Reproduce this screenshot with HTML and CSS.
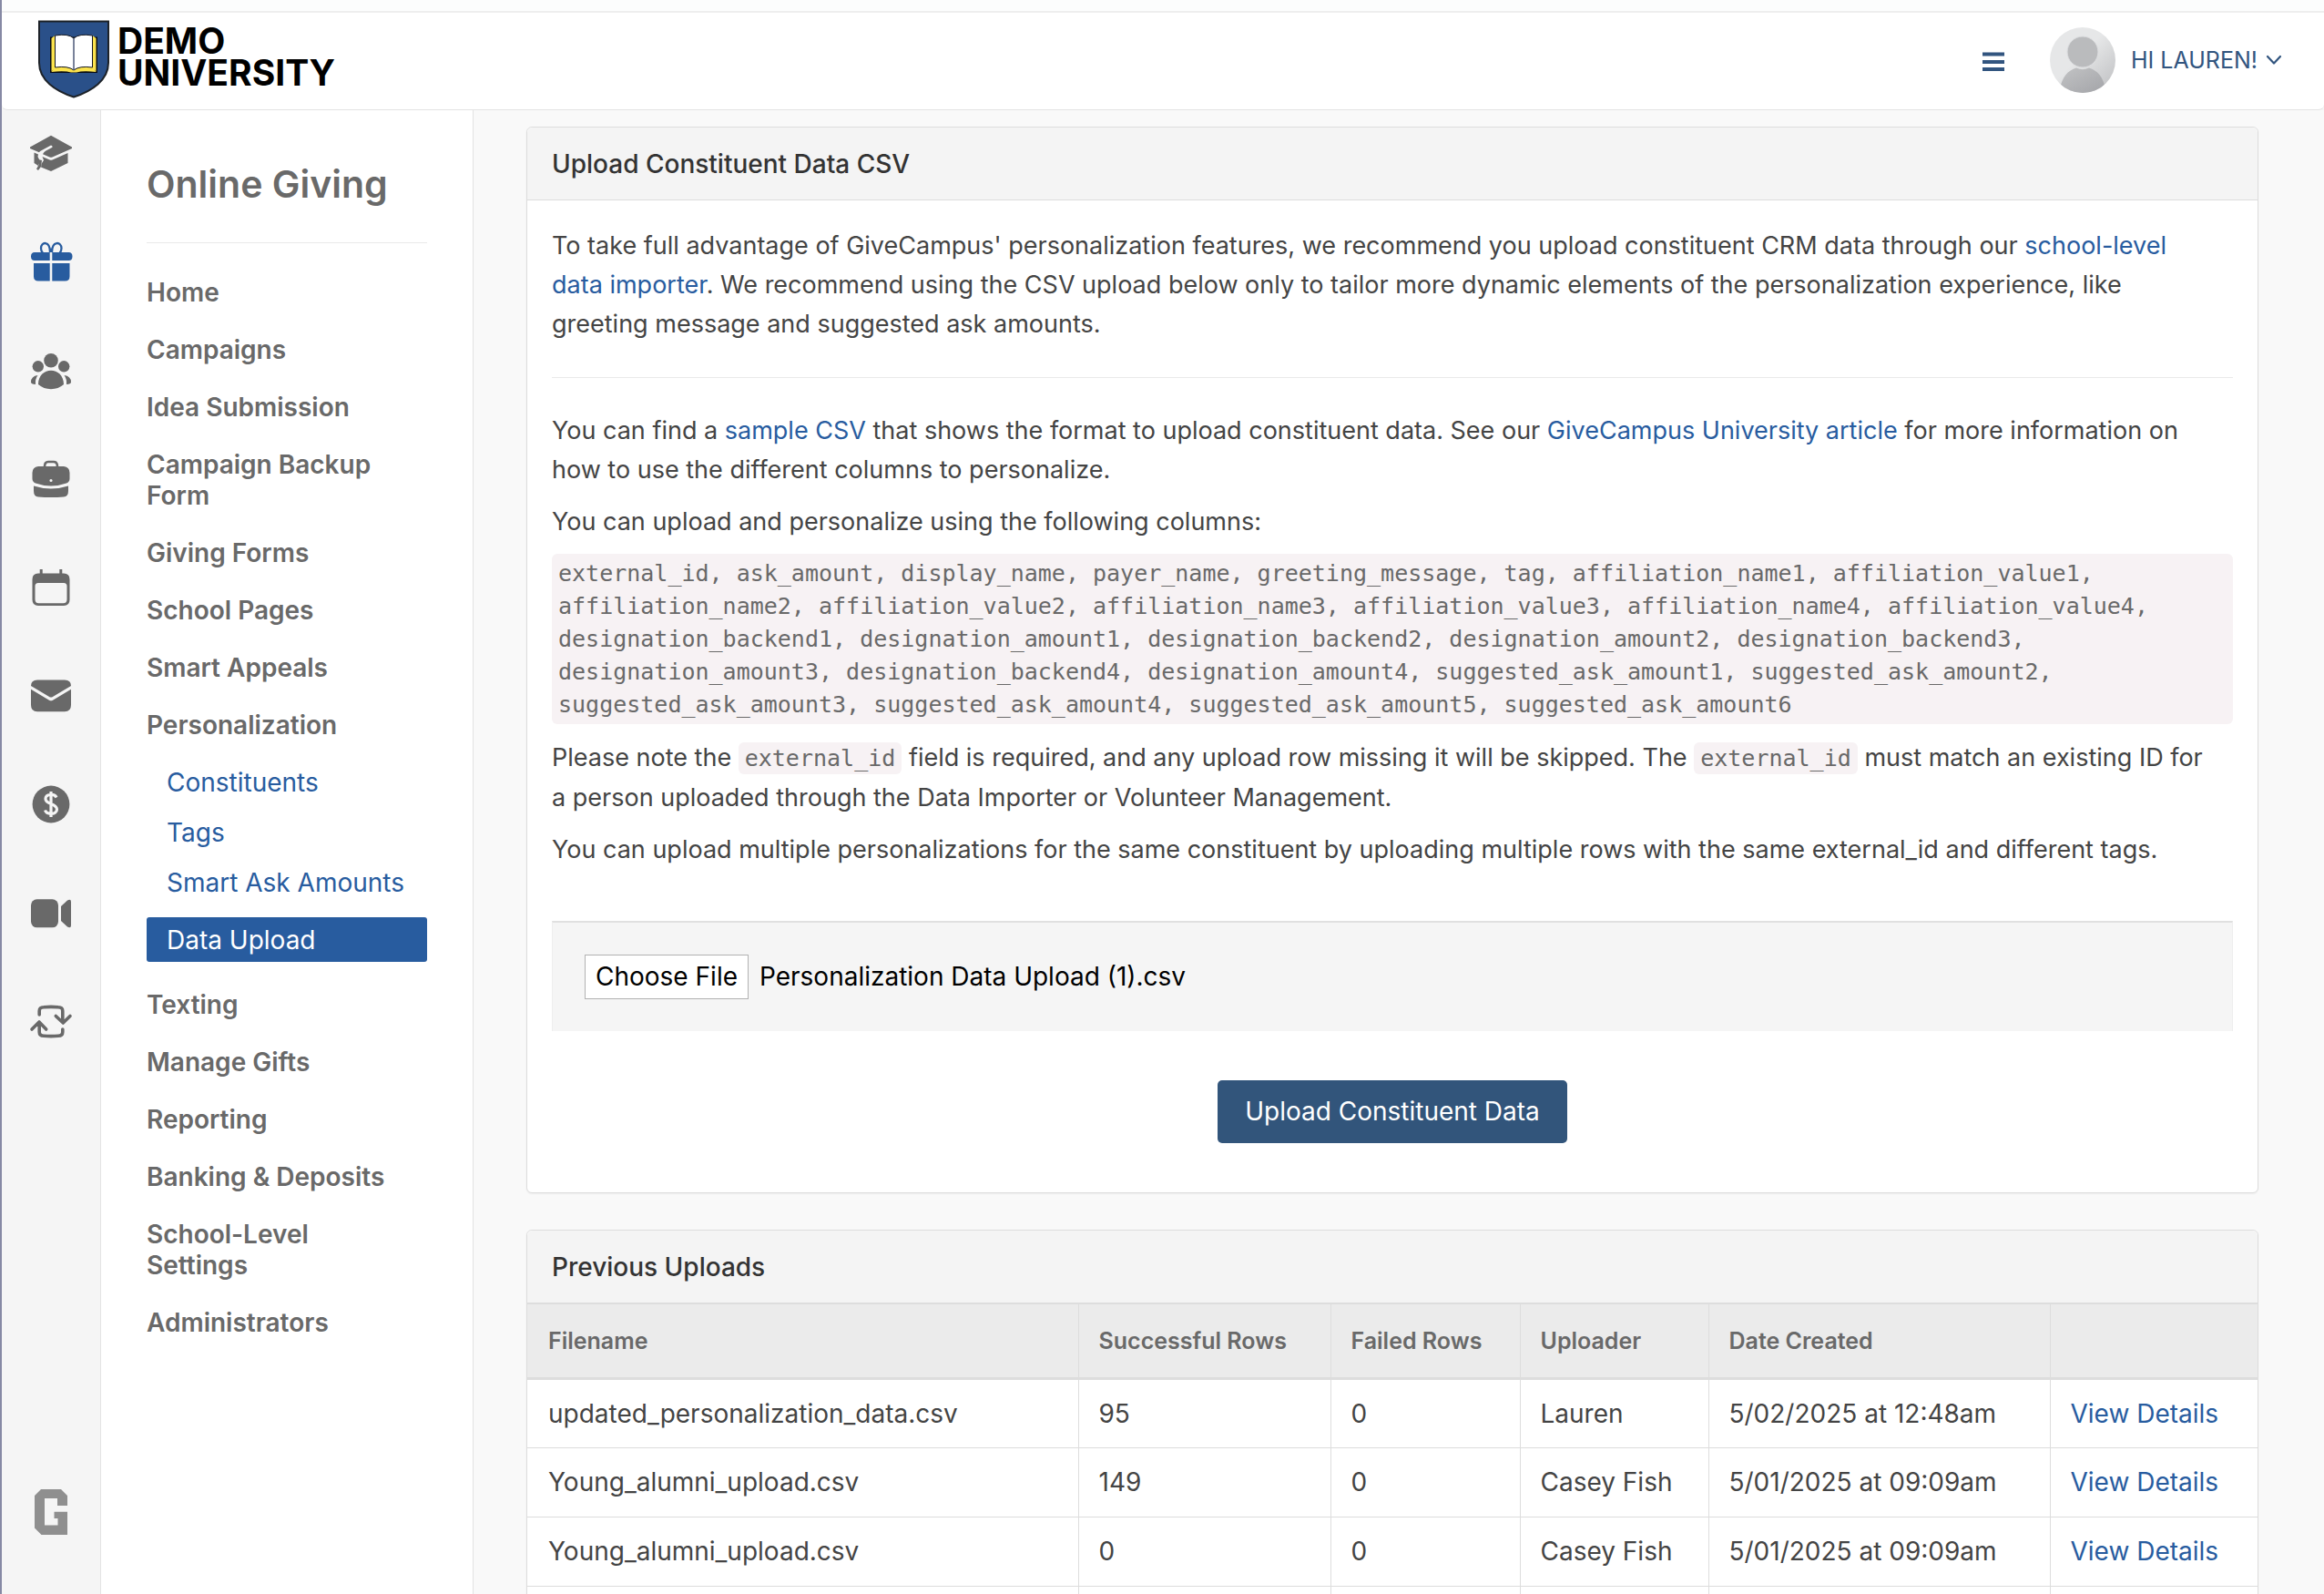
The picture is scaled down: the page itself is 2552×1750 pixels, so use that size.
FILE: index.html
```html
<!DOCTYPE html>
<html lang="en">
<head>
<meta charset="utf-8">
<title>Data Upload - Online Giving</title>
<link rel="stylesheet" href="styles.css">
</head>
<body>
<div class="app">
  <div class="strip"></div>
  <header class="topbar">
    <a class="brand" href="#">
      <svg class="brand-shield" viewBox="0 0 80 86" aria-hidden="true">
        <path d="M2 1.500H78V47C78 66 60 78 40 84.500C20 78 2 66 2 47Z" fill="#2a5089" stroke="#1d2228" stroke-width="2"/>
        <path d="M14 18.500H66V58H14Z" fill="#0b0d12"/>
        <path d="M15.500 20L20 16.500V52L15.500 56.500Z M64.500 20L60 16.500V52L64.500 56.500Z" fill="#fbe34d"/>
        <path d="M19 51.500Q33 50 40 55Q47 50 61 51.500L64.500 57Q50 55.500 43 57.500H37Q30 55.500 15.500 57Z" fill="#fbe34d"/>
        <path d="M19.500 17Q34 14.500 40 20Q46 14.500 60.500 17V52Q46 50 40 55Q34 50 19.500 52Z" fill="#fff" stroke="#14171f"/>
        <path d="M40 20V55" stroke="#4d5878" stroke-width="1.500"/>
      </svg>
      <span class="brand-name">DEMO<br>UNIVERSITY</span>
    </a>
    <div class="account">
      <button class="menu-button" type="button" aria-label="Menu">
        <svg viewBox="0 0 26 22"><path d="M1 0.500H25V4.500H1Z M1 9H25V13H1Z M1 17H25V21H1Z" fill="#32557f"/></svg>
      </button>
      <button class="user-button" type="button">
        <svg class="avatar" viewBox="0 0 72 72" aria-hidden="true">
          <defs>
            <linearGradient id="disc" x1="0" y1="0" x2="1" y2="1"><stop offset="0.450" stop-color="#e6e7e8"/><stop offset="0.850" stop-color="#c8c9cb"/></linearGradient>
            <linearGradient id="torso" x1="0" y1="0" x2="1" y2="1"><stop offset="0.200" stop-color="#bcbdbf"/><stop offset="1" stop-color="#a3a4a8"/></linearGradient>
            <clipPath id="round"><circle cx="36" cy="36" r="36"/></clipPath>
          </defs>
          <g clip-path="url(#round)">
            <rect width="72" height="72" fill="url(#disc)"/>
            <path d="M11 68C13 55 20 47 29 44.500Q36 48 43 44.500C52 47 59 55 61 68V72H11Z" fill="url(#torso)"/>
            <circle cx="36" cy="27" r="17" fill="#babbbd" stroke="#dddee0"/>
          </g>
        </svg>
        <span>HI LAUREN!</span>
        <svg class="chevron" viewBox="0 0 18 12" aria-hidden="true"><path d="M2 2L9 9.500L16 2" fill="none" stroke="#32557f" stroke-width="2.200" stroke-linecap="round" stroke-linejoin="round"/></svg>
      </button>
    </div>
  </header>

  <div class="shell">
    <nav class="rail" aria-label="Products">
      <div class="rail-icons">
        <a href="#" aria-label="School"><svg viewBox="0 0 48 48"><path d="M24 3.800L47 16.500V18L25.500 27.500Q24 28.200 22.500 27.500L15 24.200Q16 22 18 20.800L25.500 16.800Q26 14.800 24 14.600L12.500 20.800Q11.500 21.500 11 22.300L1 18V16.500Z"/><path d="M5.500 22.500L10 24.500L9.500 27L11 30L10 37L5.500 34Z M14.500 27L22.500 30.500Q24 31.200 25.500 30.500L42.500 23V34L24 43L13 38.500L14 34L16 31Z M10 30L14 31L13 38L10 42L8 40.500L10.500 36Z"/></svg></a>
        <a class="is-current" href="#" aria-label="Online Giving"><svg viewBox="0 0 48 48"><path d="M6 13H22.700V22H6Q2 22 2 17.500Q2 13 6 13Z M25.300 13H43.500Q47.500 13 47.500 17.500Q47.500 22 43.500 22H25.300Z M5 25H22.700V44.500H10Q5 44.500 5 39.500Z M25.300 25H44.500V39.500Q44.500 44.500 39.500 44.500H25.300Z"/><path d="M23 13C23 0 13 1 13 8.500Q13 12 15 13.500M25 13C25 0 35.500 1 35.500 8.500Q35.500 12 33.500 13.500" fill="none" stroke="currentColor" stroke-width="2.300"/></svg></a>
        <a href="#" aria-label="Groups"><svg viewBox="0 0 48 48"><circle cx="24" cy="12.700" r="7.800"/><circle cx="9.800" cy="19.300" r="6.200"/><circle cx="38.200" cy="19.300" r="6.200"/><path d="M10 39C10 18.500 38 18.500 38 39Q32 44.200 24 44.200T10 39Z M9.500 29Q6.500 33 7 39Q2 38.500 2 36.500Q2 30 9.500 29Z M38.500 29Q41.500 33 41 39Q46 38.500 46 36.500Q46 30 38.500 29Z"/></svg></a>
        <a href="#" aria-label="Volunteers"><svg viewBox="0 0 48 48"><path d="M17 10.500Q17 5 21 5H27Q31 5 31 10.500" fill="none" stroke="currentColor" stroke-width="2.600"/><path fill-rule="evenodd" d="M10 10H38Q44.500 11 44.500 17V23.500Q44.500 27 41 28.500Q24 34.500 7 28.500Q3.500 27 3.500 23.500V17Q3.500 11 10 10Z M24 23.900A1.600 1.600 0 1 0 24 27.100A1.600 1.600 0 1 0 24 23.900Z"/><path d="M5 31.500Q24 37.500 43 31.500V37Q43 43 38 43.500Q24 44.500 10 43.500Q5 43 5 37Z"/></svg></a>
        <a href="#" aria-label="Events"><svg viewBox="0 0 48 48"><path fill-rule="evenodd" d="M10 8.500H38Q44.500 8.500 44.500 15V37.500Q44.500 44 38 44H10Q3.500 44 3.500 37.500V15Q3.500 8.500 10 8.500Z M10 19Q6.500 19 6.500 22.500V37Q6.500 41.200 10.500 41.200H37.500Q41.500 41.200 41.500 37V22.500Q41.500 19 38 19Z"/><path d="M11.700 4H14.700V10H11.700Z M33.300 4H36.300V10H33.300Z"/></svg></a>
        <a href="#" aria-label="Email"><svg viewBox="0 0 48 48"><path d="M9 6.500H39Q46 6.500 46 13L25.500 25.200Q24 26 22.500 25.200L2 13Q2 6.500 9 6.500Z M2 16.800L22 28.700Q24 29.800 26 28.700L46 16.800V34Q46 41.300 39 41.300H9Q2 41.300 2 34Z"/></svg></a>
        <a href="#" aria-label="Payments"><svg viewBox="0 0 48 48"><circle cx="24" cy="24" r="20.400"/><path d="M30 16.500C28 12 18 12.500 18 18C18 24.500 30 22.500 30.500 29.500C30.500 35.500 19.500 36 17.500 30.500M24 10V38" fill="none" stroke="#f5f5f5" stroke-width="3.200"/></svg></a>
        <a href="#" aria-label="Video"><svg viewBox="0 0 48 48"><rect x="2" y="9.300" width="30" height="31" rx="6.500"/><path d="M35 17L42 10.500Q46 8.500 46 12V38Q46 41.500 42 39.500L35 33Z"/></svg></a>
        <a href="#" aria-label="Sync"><svg viewBox="0 0 48 48"><path d="M11.200 17V13Q11.200 8.800 16 8.800Q24 7.900 32 8.800Q36.800 8.800 36.800 13V25M29.300 18.500L37.300 26L45 18.500M36.800 33V36Q36.800 40.200 32 40.200Q24 41.100 16 40.200Q11.200 40.200 11.200 36V25M3 33L11 25L18.700 33" fill="none" stroke="currentColor" stroke-width="3.600" stroke-linecap="round" stroke-linejoin="round"/></svg></a>
      </div>
      <a class="rail-logo" href="#" aria-label="GiveCampus"><svg viewBox="0 0 36 50"><path d="M7 0H29L36 7V18H25V10H11V39.500H25.500V32H21.500V24.700H36V50H7.500L0 42.500V7Z"/></svg></a>
    </nav>

    <aside class="sidebar">
      <h1>Online Giving</h1>
      <nav aria-label="Online Giving">
        <ul class="menu">
          <li><a href="#">Home</a></li>
          <li><a href="#">Campaigns</a></li>
          <li><a href="#">Idea Submission</a></li>
          <li><a href="#">Campaign Backup Form</a></li>
          <li><a href="#">Giving Forms</a></li>
          <li><a href="#">School Pages</a></li>
          <li><a href="#">Smart Appeals</a></li>
          <li><a href="#">Personalization</a>
            <ul class="submenu">
              <li><a href="#">Constituents</a></li>
              <li><a href="#">Tags</a></li>
              <li><a href="#">Smart Ask Amounts</a></li>
              <li><a class="is-active" href="#" aria-current="page">Data Upload</a></li>
            </ul>
          </li>
          <li><a href="#">Texting</a></li>
          <li><a href="#">Manage Gifts</a></li>
          <li><a href="#">Reporting</a></li>
          <li><a href="#">Banking &amp; Deposits</a></li>
          <li><a href="#">School-Level Settings</a></li>
          <li><a href="#">Administrators</a></li>
        </ul>
      </nav>
    </aside>

    <main class="content">
      <section class="card">
        <h2>Upload Constituent Data CSV</h2>
        <div class="card-body">
          <p>To take full advantage of GiveCampus' personalization features, we recommend you upload constituent CRM data through our <a href="#">school-level data importer</a>. We recommend using the CSV upload below only to tailor more dynamic elements of the personalization experience, like greeting message and suggested ask amounts.</p>
          <hr>
          <p>You can find a <a href="#">sample CSV</a> that shows the format to upload constituent data. See our <a href="#">GiveCampus University article</a> for more information on how to use the different columns to personalize.</p>
          <p>You can upload and personalize using the following columns:</p>
          <code class="columns">external_id, ask_amount, display_name, payer_name, greeting_message, tag, affiliation_name1, affiliation_value1, affiliation_name2, affiliation_value2, affiliation_name3, affiliation_value3, affiliation_name4, affiliation_value4, designation_backend1, designation_amount1, designation_backend2, designation_amount2, designation_backend3, designation_amount3, designation_backend4, designation_amount4, suggested_ask_amount1, suggested_ask_amount2, suggested_ask_amount3, suggested_ask_amount4, suggested_ask_amount5, suggested_ask_amount6</code>
          <p>Please note the <code>external_id</code> field is required, and any upload row missing it will be skipped. The <code>external_id</code> must match an existing ID for a person uploaded through the Data Importer or Volunteer Management.</p>
          <p>You can upload multiple personalizations for the same constituent by uploading multiple rows with the same external_id and different tags.</p>
          <form class="upload">
            <div class="upload-field"><input id="csv-file" class="file-input" type="file" accept=".csv" aria-label="Constituent data CSV"></div>
            <button class="primary" type="submit">Upload Constituent Data</button>
          </form>
        </div>
      </section>

      <section class="card">
        <h2>Previous Uploads</h2>
        <table class="uploads">
          <colgroup><col class="w-file"><col class="w-ok"><col class="w-failed"><col class="w-user"><col class="w-date"><col class="w-link"></colgroup>
          <thead>
            <tr><th scope="col">Filename</th><th scope="col">Successful Rows</th><th scope="col">Failed Rows</th><th scope="col">Uploader</th><th scope="col">Date Created</th><td></td></tr>
          </thead>
          <tbody>
            <tr><td>updated_personalization_data.csv</td><td>95</td><td>0</td><td>Lauren</td><td>5/02/2025 at 12:48am</td><td><a href="#">View Details</a></td></tr>
            <tr><td>Young_alumni_upload.csv</td><td>149</td><td>0</td><td>Casey Fish</td><td>5/01/2025 at 09:09am</td><td><a href="#">View Details</a></td></tr>
            <tr><td>Young_alumni_upload.csv</td><td>0</td><td>0</td><td>Casey Fish</td><td>5/01/2025 at 09:09am</td><td><a href="#">View Details</a></td></tr>
            <tr><td></td><td></td><td></td><td></td><td></td><td></td></tr>
          </tbody>
        </table>
      </section>
    </main>
  </div>
</div>
<script src="script.js"></script>
</body>
</html>
```
FILE: styles.css
```css
* { box-sizing: border-box; }

body {
  margin: 0;
  font-family: Inter, "Liberation Sans", sans-serif;
  font-size: 28px;
  line-height: 43px;
  color: #444;
  background: #f9f9f9;
}

a { color: #285c9f; text-decoration: none; }
h1, h2, p, ul { margin: 0; padding: 0; }
ul { list-style: none; }
svg { display: block; }
button { font: inherit; border: 0; background: none; padding: 0; cursor: pointer; }

.app {
  display: flex;
  flex-direction: column;
  height: 100vh;
  border-left: 2px solid #8689a4;
  background: #f5f5f5;
}

.strip { flex: none; height: 14px; background: #fcfdfd; border-bottom: 2px solid #eee; }

/* Top bar */
.topbar {
  flex: none;
  display: flex;
  align-items: center;
  justify-content: space-between;
  height: 107px;
  padding: 0 46px 2px 39px;
  background: #fff;
  border-bottom: 1px solid #e3e3e3;
  border-radius: 0 0 6px 6px;
}
.brand { display: flex; align-items: center; gap: 8px; padding-bottom: 2px; color: #000; }
.brand-shield { width: 80px; height: 86px; }
.brand-name { font-size: 39px; line-height: 35px; font-weight: 700; padding-bottom: 6px; }
.account { display: flex; align-items: center; gap: 49px; }
.menu-button { padding-top: 3px; }
.menu-button svg { width: 26px; height: 22px; }
.user-button { display: flex; align-items: center; color: #32557f; font-size: 25px; line-height: 30px; }
.avatar { width: 72px; height: 72px; margin-right: 17px; }
.chevron { width: 18px; height: 12px; margin-left: 9px; }

/* Icon rail */
.shell { flex: 1; display: flex; min-height: 0; }
.rail {
  flex: none;
  display: flex;
  flex-direction: column;
  justify-content: space-between;
  align-items: center;
  width: 109px;
  padding: 24px 0 65px;
  border-right: 1px solid #e3e3e3;
}
.rail-icons { display: grid; gap: 71px; }
.rail a { display: block; color: #696969; }
.rail a.is-current { color: #285c9f; }
.rail svg { fill: currentColor; }
.rail-icons svg { width: 48px; height: 48px; }
.rail a.rail-logo { color: #8f8f8f; }
.rail-logo svg { width: 36px; height: 50px; }

/* Section menu */
.sidebar {
  flex: none;
  width: 409px;
  padding: 53px 50px 0;
  background: #fff;
  border-right: 1px solid #e3e3e3;
  color: #696969;
}
.sidebar h1 {
  padding-bottom: 36px;
  border-bottom: 1px solid #eaeaea;
  font-size: 41px;
  line-height: 56px;
  font-weight: 600;
}
.menu { display: grid; gap: 29px; padding-top: 37px; font-weight: 600; line-height: 34px; }
.menu a { display: block; padding-right: 20px; color: #696969; }
.submenu { display: grid; gap: 21px; padding-top: 29px; font-weight: 400; }
.submenu a { padding-left: 22px; color: #285c9f; }
.submenu a.is-active {
  padding-top: 8px;
  padding-bottom: 7px;
  margin-bottom: 1px;
  border-radius: 3px;
  background: #285c9f;
  color: #fff;
}

/* Cards */
.content { flex: 1; min-width: 0; padding: 18px 72px 0 58px; background: #f9f9f9; overflow-y: auto; scrollbar-width: none; }
.card {
  margin-bottom: 40px;
  border: 1px solid #ddd;
  border-radius: 6px;
  background: #fff;
  box-shadow: 0 1px 2px #0000000d;
}
.card h2 {
  padding: 19px 27px 17px;
  border-bottom: 1px solid #ddd;
  border-radius: 6px 6px 0 0;
  background: #f4f4f4;
  color: #333;
  font-size: 28px;
  line-height: 43px;
  font-weight: 500;
}
.card-body { padding: 28px 27px 54px; }
.card-body p { margin-bottom: 14px; padding-right: 20px; font-size: 27px; }
.card-body hr { margin: 37px 0 36px; border: 0; border-top: 1px solid #eaeaea; }

code {
  padding: 3px 7px;
  border-radius: 6px;
  background: #f7f2f4;
  color: #696969;
  font-family: "DejaVu Sans Mono", monospace;
  font-size: 25px;
}
code.columns { display: block; margin-bottom: 15px; padding-top: 4px; line-height: 36px; }

.upload { display: flex; flex-direction: column; align-items: center; gap: 54px; padding-top: 43px; }
.upload-field {
  width: 100%;
  padding: 35px;
  border: 1px solid #eee;
  border-top: 2px solid #e0e0e0;
  border-bottom: 0;
  background: #f5f5f5;
}
.file-input { display: block; width: 100%; height: 49px; color: #000; font: inherit; }
.file-input::file-selector-button {
  height: 49px;
  margin: 0 12px 0 0;
  padding: 0 11px;
  border: 1px solid #b2b2b2;
  border-radius: 0;
  background: #fff;
  color: #000;
  font: inherit;
}
.primary { padding: 13px 30px; border-radius: 5px; background: #32557b; color: #fff; }

/* Upload history */
.uploads { width: 100%; border-collapse: collapse; table-layout: fixed; }
.w-file { width: 605px; }
.w-ok { width: 277px; }
.w-failed { width: 208px; }
.w-user { width: 207px; }
.w-date { width: 375px; }
.uploads th, .uploads td { height: 76px; padding: 0 22px; border: 1px solid #ddd; text-align: left; }
.uploads tr > :first-child { padding-left: 23px; border-left: 0; }
.uploads tr > :last-child { border-right: 0; }
.uploads thead > tr > * { height: 82px; background: #ebebeb; border-bottom: 3px solid #ddd; color: #696969; font-size: 25px; font-weight: 600; }
```
FILE: script.js
```js
const transfer = new DataTransfer();
transfer.items.add(new File([""], "Personalization Data Upload (1).csv", { type: "text/csv" }));
document.getElementById("csv-file").files = transfer.files;
```
